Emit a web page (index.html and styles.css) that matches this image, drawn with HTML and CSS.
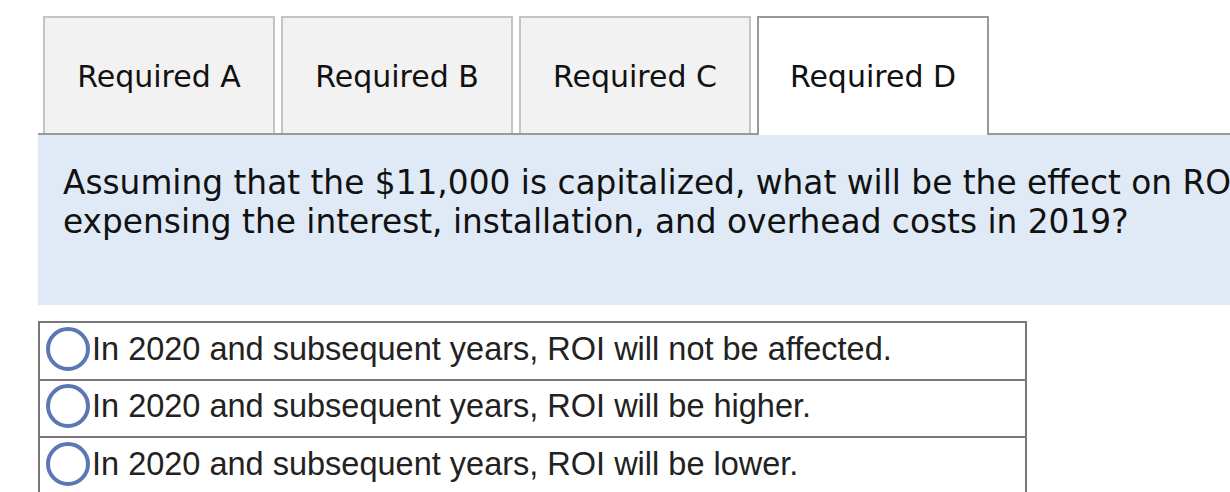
FILE: index.html
```html
<!DOCTYPE html>
<html lang="en">
<head>
    <meta charset="UTF-8">
    <meta name="viewport" content="width=device-width, initial-scale=1.0">
    <title>Required D</title>
    <link rel="stylesheet" href="styles.css">
</head>
<body>
    <div class="question">
        <ul class="tabs">
            <li class="tab">Required A</li>
            <li class="tab">Required B</li>
            <li class="tab">Required C</li>
            <li class="tab active">Required D</li>
        </ul>

        <div class="prompt">
            <p>Assuming that the $11,000 is capitalized, what will be the effect on ROI of expensing the interest, installation, and overhead costs in 2019?</p>
        </div>

        <table class="choices">
            <tr>
                <td><span class="radio"></span>In 2020 and subsequent years, ROI will not be affected.</td>
            </tr>
            <tr>
                <td><span class="radio"></span>In 2020 and subsequent years, ROI will be higher.</td>
            </tr>
            <tr>
                <td><span class="radio"></span>In 2020 and subsequent years, ROI will be lower.</td>
            </tr>
        </table>
    </div>
</body>
</html>
```

FILE: styles.css
```css
html, body {
    margin: 0;
    overflow: hidden;
    background: #fff;
}

body {
    font-family: "DejaVu Sans", Verdana, sans-serif;
    color: #111;
}

.question {
    margin-left: 38px;
    width: 1400px;
}

/* Tab strip */
.tabs {
    display: flex;
    gap: 6px;
    list-style: none;
    margin: 0;
    padding: 16px 0 0 5px;
    border-bottom: 2px solid #999;
}

.tab {
    box-sizing: border-box;
    width: 232px;
    height: 117px;
    display: flex;
    align-items: center;
    justify-content: center;
    background: #f2f2f2;
    border: 2px solid #c4c4c4;
    border-bottom: none;
    font-size: 30px;
    padding-top: 2px;
}
.tab.active {
    background: #fff;
    border-color: #999;
    height: 119px;
    margin-bottom: -2px;
    padding-bottom: 2px;
}

/* Question text */
.prompt {
    box-sizing: border-box;
    height: 170px;
    background: #dfeaf6;
    padding: 29px 25px 0;
}
.prompt p {
    margin: 0;
    width: 1300px;
    font-size: 32.8px;
    line-height: 39px;
}

/* Answer choices */
.choices {
    margin-top: 16px;
    width: 989px;
    border-collapse: collapse;
    font-family: "Liberation Sans", Arial, sans-serif;
    font-size: 32.5px;
    color: #222;
}
.choices td {
    border: 2px solid #777;
    height: 55.5px;
    padding: 0 0 0 6px;
    white-space: nowrap;
}

.radio {
    display: inline-block;
    box-sizing: border-box;
    width: 44px;
    height: 44px;
    border: 4px solid #5b77b4;
    border-radius: 50%;
    vertical-align: middle;
    margin-right: 2px;
    position: relative;
    top: -2px;
}
```
